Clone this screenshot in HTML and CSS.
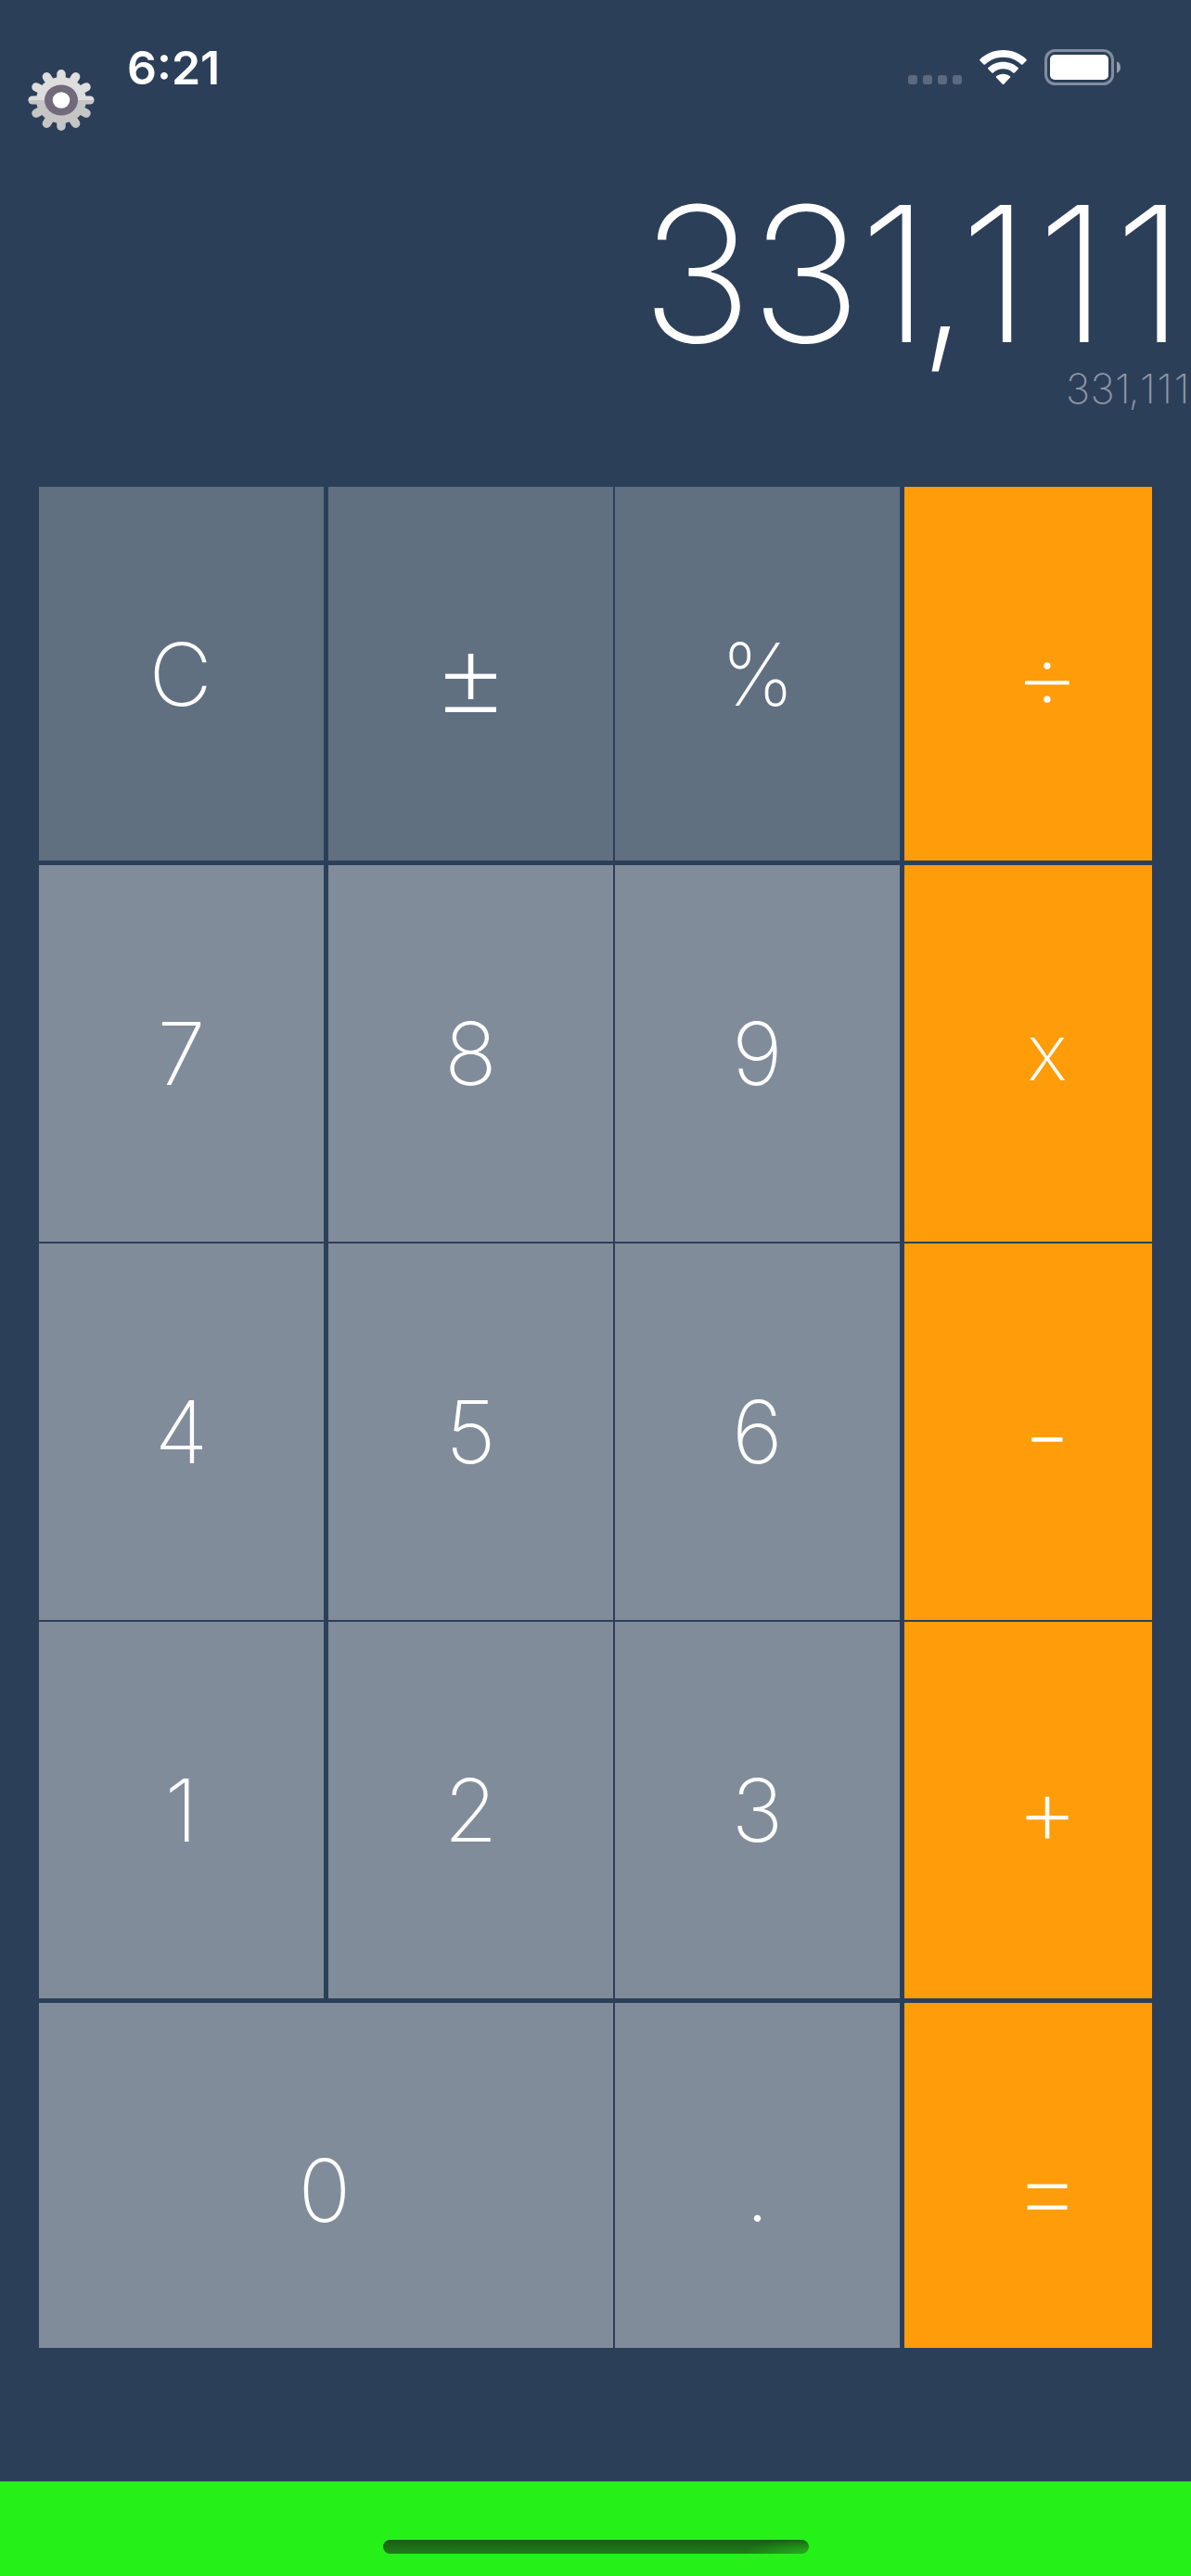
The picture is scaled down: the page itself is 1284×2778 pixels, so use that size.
FILE: index.html
```html
<!DOCTYPE html>
<html lang="en">
<head>
<meta charset="utf-8">
<title>Calculator</title>
<link rel="stylesheet" href="styles.css">
</head>
<body>
<div class="screen">
  <header class="status">
    <svg class="gear" viewBox="-36 -33 72 66" preserveAspectRatio="none" aria-label="Settings">
      <defs>
        <linearGradient id="metal" x1="0" y1="-33" x2="0" y2="33" gradientUnits="userSpaceOnUse">
          <stop offset="0.5" stop-color="#dedede"/><stop offset="0.5" stop-color="#c5c5c5"/>
        </linearGradient>
      </defs>
      <g stroke="url(#metal)" stroke-width="9.5" stroke-linecap="round" fill="none">
        <path d="M.01-28.2L-.01 28.2M-15.6-25.2L15.6 25.2M15.6-25.2L-15.6 25.2M-27-14.1L27 14.1M27-14.1L-27 14.1"/>
      </g>
      <path d="M-31-4.6H31A4.6 4.6 0 0 1 31 4.6H-31A4.6 4.6 0 0 1-31-4.6Z" fill="url(#metal)"/>
      <ellipse rx="27" ry="25" fill="url(#metal)"/>
      <ellipse rx="18" ry="16.5" fill="#72697b"/>
      <ellipse rx="9.3" ry="8.7" fill="#fff"/>
    </svg>
    <time class="clock">6:21</time>
    <div class="indicators">
      <div class="cell"><i></i><i></i><i></i><i></i></div>
      <svg class="wifi" viewBox="0 0 51 38">
        <path fill="#fff" d="M25.500 0C35.500 0 44.500 4 50.500 10Q51.200 10.800 50.500 11.500L46.500 15.500Q45.800 16.200 45 15.500C39.500 10.500 33 7.800 25.500 7.800S11.500 10.500 6 15.500Q5.200 16.200 4.500 15.500L.5 11.500Q-.2 10.800.5 10C6.500 4 15.500 0 25.500 0ZM25.500 12.700C32 12.700 37.500 15 41.700 19Q42.400 19.700 41.700 20.400L37.700 24.400Q37 25.100 36.200 24.500C33 21.700 29.700 20.300 25.500 20.300S18 21.700 14.800 24.500Q14 25.100 13.300 24.400L9.300 20.400Q8.600 19.700 9.300 19C13.500 15 19 12.700 25.500 12.700ZM25.500 25.800C28.500 25.800 31 26.800 32.900 28.300Q33.600 29 32.900 29.800L26.300 36.700Q25.500 37.500 24.700 36.700L18.100 29.800Q17.400 29 18.100 28.300C20 26.800 22.500 25.800 25.500 25.800Z"/>
      </svg>
      <svg class="battery" viewBox="0 0 82 39">
        <rect x="1.500" y="1.500" width="72" height="36" rx="10" fill="none" stroke="#828d9f" stroke-width="3"/>
        <rect x="6" y="6" width="63" height="27" rx="5" fill="#fff"/>
        <path d="M78 13.200Q82 15 82 19.500T78 25.800Z" fill="#959eac"/>
      </svg>
    </div>
  </header>

  <section class="display">
    <div class="result">33<span class="lead">1</span><span class="comma">,</span><span class="ones">111</span></div>
    <div class="history">33<span class="lead">1</span><span class="comma">,</span><span class="ones">111</span></div>
  </section>

  <main class="keys">
    <button class="key fn clear"><span>C</span></button>
    <button class="key fn sign"><span>±</span></button>
    <button class="key fn"><span class="percent">%</span></button>
    <button class="key op"><span class="divide">÷</span></button>
    <button class="key"><span>7</span></button>
    <button class="key"><span>8</span></button>
    <button class="key"><span>9</span></button>
    <button class="key op times"><span>x</span></button>
    <button class="key"><span>4</span></button>
    <button class="key"><span>5</span></button>
    <button class="key"><span>6</span></button>
    <button class="key op subtract"><span>-</span></button>
    <button class="key"><span>1</span></button>
    <button class="key"><span>2</span></button>
    <button class="key"><span>3</span></button>
    <button class="key op"><span class="plus">+</span></button>
    <button class="key zero"><span>0</span></button>
    <button class="key dot"><span>.</span></button>
    <button class="key op equals"><span>=</span></button>
  </main>

  <footer class="banner"><div class="home"></div></footer>
</div>
</body>
</html>
```
FILE: styles.css
```css
* { box-sizing: border-box; }
body { margin: 0; background: #2c3f59; }
.screen {
  width: 1284px;
  height: 2778px;
  display: flex;
  flex-direction: column;
  overflow: hidden;
  background: #2c3f59;
  color: #fff;
  font-family: Inter, "Liberation Sans", sans-serif;
}
.status {
  height: 180px;
  flex: none;
  display: flex;
  align-items: flex-start;
  padding: 0 76px 0 30px;
}
.gear { width: 72px; height: 66px; margin-top: 75px; flex: none; }
.clock {
  margin: 43px 0 0 35px;
  font-size: 50px;
  line-height: 60px;
  font-weight: 600;
}
.indicators {
  display: flex;
  margin: 53px 0 0 auto;
  align-items: flex-start;
}
.cell { display: flex; gap: 6px; margin: 28px 19px 0 0; }
.cell i { width: 10px; height: 10px; border-radius: 3px; background: #5c6a7f; }
.wifi { width: 51px; height: 38px; margin: 1px 19px 0 0; }
.battery { width: 82px; height: 39px; }

.display {
  height: 345px;
  flex: none;
  display: flex;
  flex-direction: column;
  align-items: flex-end;
  padding-top: 11px;
}
.result {
  font-size: 203px;
  line-height: 208px;
  font-weight: 200;
  letter-spacing: -3px;
  white-space: nowrap;
}
.result .lead { letter-spacing: -14px; }
.result .comma { letter-spacing: -11px; }
.result .ones { letter-spacing: 6px; }
.history {
  font-size: 44px;
  line-height: 40px;
  font-weight: 200;
  letter-spacing: .4px;
  color: #8d96a5;
}
.history .lead { letter-spacing: -2.4px; }
.history .comma { letter-spacing: .4px; }
.history .ones { letter-spacing: 1.6px; }

.keys {
  flex: none;
  height: 2007px;
  margin: 0 42px;
  display: grid;
  grid-template-columns: 307px 5px 307px 2px 307px 5px 267px;
  grid-template-rows: 403px 5px 406px 2px 406px 2px 406px 5px 372px;
}
.key {
  border: 0;
  padding: 0;
  display: flex;
  align-items: center;
  justify-content: center;
  background: #818c9b;
  color: #fff;
  font: 200 94px/114px Inter, "Liberation Sans", sans-serif;
}
.key:nth-child(-n+4) { grid-row: 1; }
.key:nth-child(n+5):nth-child(-n+8) { grid-row: 3; }
.key:nth-child(n+9):nth-child(-n+12) { grid-row: 5; }
.key:nth-child(n+13):nth-child(-n+16) { grid-row: 7; }
.key:nth-child(n+17) { grid-row: 9; padding-top: 32px; }
.key:nth-child(4n+1) { grid-column: 1; }
.key:nth-child(4n+2) { grid-column: 3; }
.key:nth-child(4n+3) { grid-column: 5; }
.key:nth-child(4n) { grid-column: 7; }
.key.zero { grid-column: 1 / 4; padding-right: 3px; }
.key.dot { grid-column: 5; }
.key.fn { background: #607081; }
.key.clear { padding-right: 2px; }
.key.sign { font-size: 128px; padding-top: 4px; }
.key.op { background: #ff9c0a; padding-left: 41px; }
.key.times { font-size: 84px; padding-bottom: 2px; }
.key.subtract { font-size: 115px; padding-top: 5px; }
.key.equals {
  grid-column: 7;
  padding-top: 28px;
  font-size: 122px;
  font-weight: 100;
  -webkit-text-stroke: 1.5px #fff;
}
.percent { transform: scaleX(.94); }
.divide {
  font-size: 112px;
  font-weight: 100;
  -webkit-text-stroke: 1.5px #fff;
}
.plus { font-size: 104px; }

.banner {
  margin-top: auto;
  height: 102px;
  flex: none;
  display: flex;
  justify-content: center;
  align-items: flex-end;
  padding-bottom: 24px;
  background: #25f017;
}
.home {
  width: 459px;
  height: 15px;
  border-radius: 8px;
  background:
    radial-gradient(ellipse 70px 16px at 100% 100%, rgba(36,180,28,.9), rgba(36,180,28,0)),
    linear-gradient(#1b5d14, #1e7f18);
}
```
